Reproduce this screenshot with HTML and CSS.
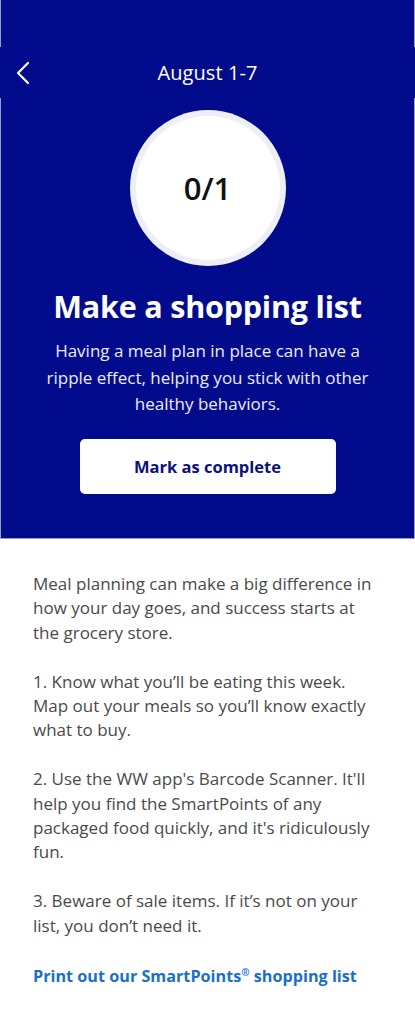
FILE: index.html
```html
<!DOCTYPE html>
<html lang="en">
<head>
  <meta charset="UTF-8">
  <title>Make a shopping list</title>
  <link rel="stylesheet" href="styles.css">
</head>
<body>

<!-- Blue hero -->
<section class="hero">
  <div class="status-space"></div>
  <nav class="top-bar">
    <a class="back" href="#" aria-label="Back">
      <svg width="14" height="24" viewBox="0 0 14 24"><path d="M12 2 L2 12 L12 22" fill="none" stroke="#fff" stroke-width="2.2" stroke-linecap="round" stroke-linejoin="round"/></svg>
    </a>
    <span class="week">August 1-7</span>
  </nav>

  <div class="progress-ring">
    <div class="progress-inner">0/1</div>
  </div>

  <h1>Make a shopping list</h1>
  <p class="lead">Having a meal plan in place can have a ripple effect, helping you stick with other healthy behaviors.</p>

  <button class="complete-btn">Mark as complete</button>
</section>

<!-- Article -->
<main class="article">
  <p>Meal planning can make a big difference in how your day goes, and success starts at the grocery store.</p>
  <p>1. Know what you’ll be eating this week. Map out your meals so you’ll know exactly what to buy.</p>
  <p>2. Use the WW app's Barcode Scanner. It'll help you find the SmartPoints of any packaged food quickly, and it's ridiculously fun.</p>
  <p>3. Beware of sale items. If it’s not on your list, you don’t need it.</p>
  <a class="print-link" href="#">Print out our SmartPoints<sup>®</sup> shopping list</a>
</main>

</body>
</html>
```

FILE: styles.css
```css
:root {
  --navy: #020b8c;
  --edge: #9a9cc6;
  --text: #4a4a4a;
  --link: #1b6fc8;
}
* {
  box-sizing: border-box;
  margin: 0;
  padding: 0;
}
body {
  font-family: 'Open Sans', 'Noto Sans', sans-serif;
  background: #fff;
  width: 415px;
}

/* hero */
.hero {
  background: var(--navy);
  border: 1px solid var(--edge);
  border-top: none;
  height: 539px;
  display: flex;
  flex-direction: column;
  align-items: center;
  color: #fff;
}
.status-space {
  height: 47px;
  width: 100%;
}
.top-bar {
  width: calc(100% + 2px);
  margin: 0 -1px;
  height: 51px;
  background: var(--navy);
  display: flex;
  align-items: center;
  justify-content: center;
  position: relative;
}
.back {
  position: absolute;
  left: 16px;
  top: 14px;
  display: flex;
}
.week {
  font-size: 20px;
  letter-spacing: 0.1px;
}

.progress-ring {
  margin-top: 12px;
  width: 156px;
  height: 156px;
  border-radius: 50%;
  background: #eeeff6;
  padding: 6px;
}
.progress-inner {
  width: 100%;
  height: 100%;
  border-radius: 50%;
  background: #fff;
  display: flex;
  align-items: center;
  justify-content: center;
  color: #111;
  font-size: 31px;
  font-weight: 600;
}

h1 {
  margin-top: 20px;
  font-size: 30.5px;
  font-weight: 700;
  line-height: 40px;
  letter-spacing: -0.2px;
}
.lead {
  margin-top: 12px;
  width: 334px;
  text-align: center;
  font-size: 17px;
  line-height: 26.5px;
  color: #ececf6;
}
.complete-btn {
  margin-top: 21px;
  width: 256px;
  height: 55px;
  background: #fff;
  border: none;
  border-radius: 5px;
  color: #0b1180;
  font-family: inherit;
  font-size: 16.5px;
  font-weight: 700;
}

/* article */
.article {
  padding: 33px 40px 0 33px;
  color: var(--text);
  font-size: 17px;
  line-height: 24.4px;
}
.article p {
  margin-bottom: 24.4px;
}
.print-link {
  display: inline-block;
  margin-top: 2px;
  color: var(--link);
  font-size: 16.2px;
  font-weight: 700;
  text-decoration: none;
}
.print-link sup {
  font-size: 10px;
  vertical-align: 6px;
  line-height: 0;
}
```
